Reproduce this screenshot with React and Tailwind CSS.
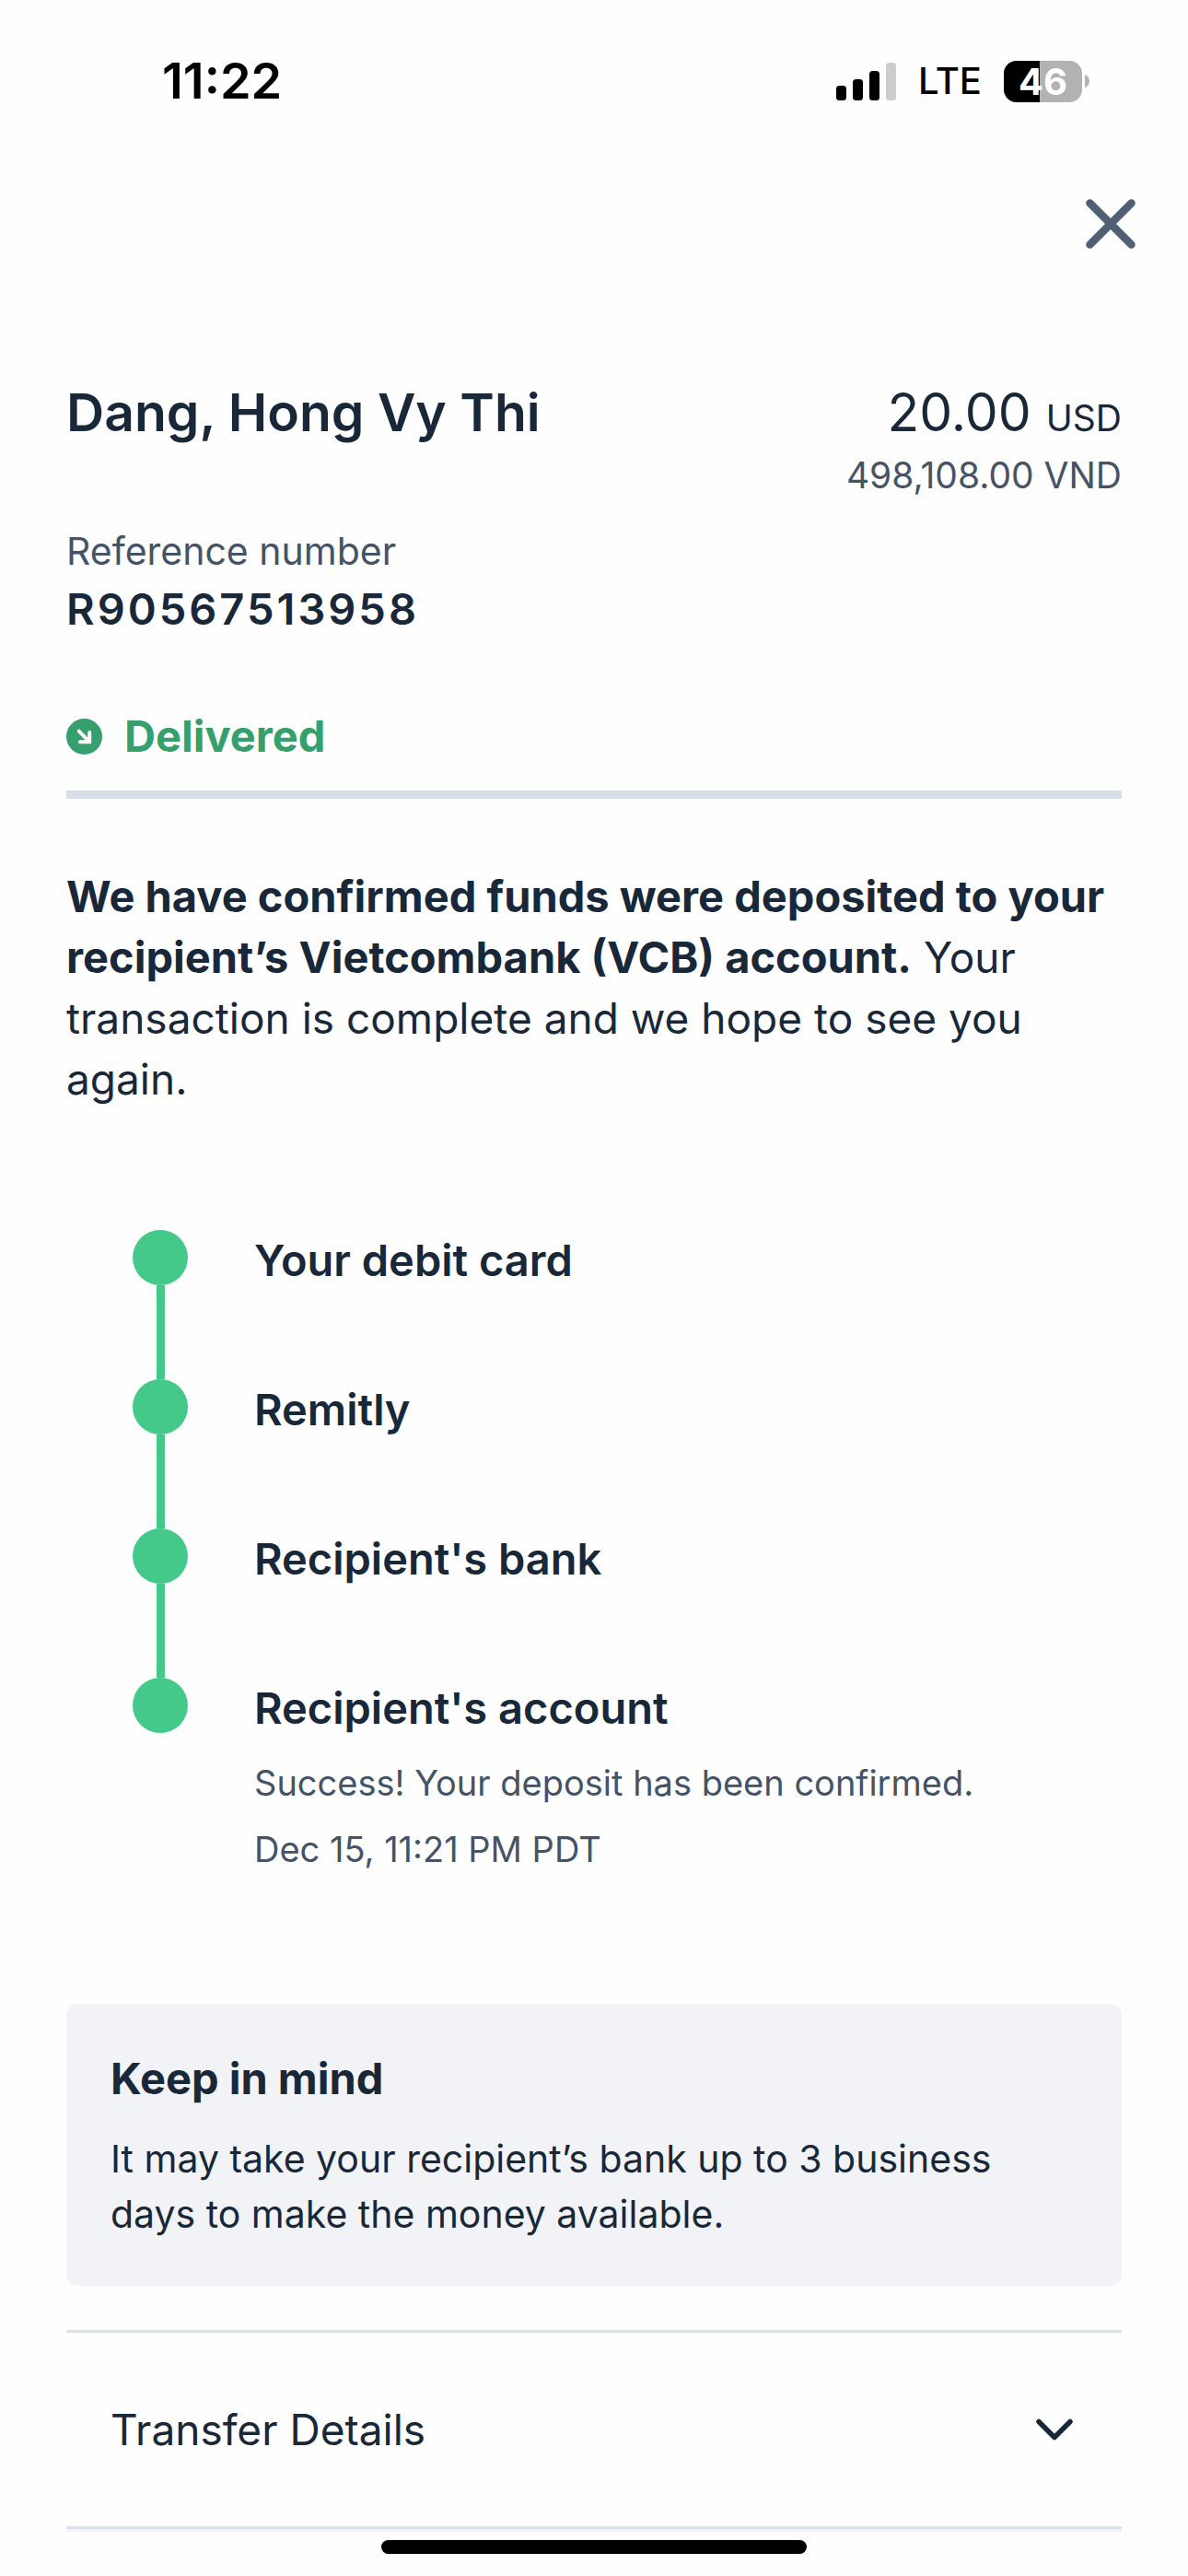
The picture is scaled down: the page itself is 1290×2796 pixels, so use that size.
import React, { useState } from "react";

const STEPS = [
  { id: 1, title: "Your debit card" },
  { id: 2, title: "Remitly" },
  { id: 3, title: "Recipient's bank" },
  {
    id: 4,
    title: "Recipient's account",
    notes: ["Success! Your deposit has been confirmed.", "Dec 15, 11:21 PM PDT"],
  },
];

function SignalIcon() {
  return (
    <svg className="w-[65px] h-[41px]" viewBox="0 0 65 41" aria-hidden="true">
      <rect x="0" y="25" width="11" height="16" rx="3.5" />
      <rect x="18" y="18" width="11" height="23" rx="3.5" />
      <rect x="36" y="9" width="11" height="32" rx="3.5" />
      <rect x="54" y="0" width="11" height="41" rx="3.5" fill="#cccccc" />
    </svg>
  );
}

function Battery({ level }) {
  return (
    <div className="flex items-center gap-[3px]">
      <div className="relative w-[85px] h-[45px] rounded-[14px] bg-[#b2b2b2]">
        <div className="absolute inset-y-0 left-0 rounded-l-[14px] bg-black" style={{ width: `${level}%` }} />
        <span className="relative block text-center text-[40px] leading-[45px] font-bold text-white">{level}</span>
      </div>
      <svg className="w-[5px] h-[14px]" viewBox="0 0 5 14" aria-hidden="true">
        <path d="M0 0C3 1 5 3.700 5 7s-2 6-5 7z" fill="#b2b2b2" />
      </svg>
    </div>
  );
}

function StatusBar() {
  return (
    <div className="flex items-center justify-between h-[176px] pl-[176px] pr-[107px] text-black">
      <span className="text-[54px] leading-[60px] font-semibold">11:22</span>
      <div className="flex items-center">
        <SignalIcon />
        <span className="mx-6 text-[40px] leading-[60px] font-medium">LTE</span>
        <Battery level={46} />
      </div>
    </div>
  );
}

function Step({ step, last }) {
  return (
    <li className="flex gap-[72px]">
      <div className="flex flex-col items-center">
        <span className="size-[60px] rounded-full bg-[#45c98a]" />
        {!last && <span className="w-[9px] h-[102px] bg-[#45c98a]" />}
      </div>
      <div>
        <h3 className="text-[47px] leading-[66px] font-semibold">{step.title}</h3>
        {step.notes && (
          <div className="mt-3 text-[38px] leading-[72px] text-[#445365]">
            {step.notes.map(note => (
              <p key={note}>{note}</p>
            ))}
          </div>
        )}
      </div>
    </li>
  );
}

export default function App() {
  const [open, setOpen] = useState(false);

  return (
    <div className="min-h-screen bg-[#fefefe] font-['Inter',sans-serif] text-[#192839]">
      <StatusBar />

      <div className="flex items-center justify-end h-[134px] pr-[39px]">
        <button type="button" aria-label="Close" className="size-[90px] p-[18px]">
          <svg className="size-[54px]" viewBox="0 0 54 54" fill="none" stroke="#506073" strokeWidth="8.500" strokeLinecap="round" aria-hidden="true">
            <path d="M4.500 4.500l45 45M49.500 4.500l-45 45" />
          </svg>
        </button>
      </div>

      <main className="px-[72px] pt-[102px]">
        <div className="flex justify-between">
          <h1 className="text-[57px] leading-[72px] font-semibold">Dang, Hong Vy Thi</h1>
          <div className="text-right">
            <p className="text-[57px] leading-[72px]">
              20.00 <span className="text-[39px] leading-[39px]">USD</span>
            </p>
            <p className="text-[39px] leading-[64px] text-[#445365]">498,108.00 VND</p>
          </div>
        </div>

        <dl className="mt-5">
          <dt className="text-[41px] leading-[60px] text-[#445365]">Reference number</dt>
          <dd className="text-[47px] leading-[66px] font-semibold tracking-[3px]">R90567513958</dd>
        </dl>

        <div className="flex items-center gap-6 mt-[72px] pb-[26px] border-b-[9px] border-[#d9dfe8] text-[#36a06d]">
          <svg className="size-[39px]" viewBox="0 0 39 39" fill="none" aria-hidden="true">
            <circle cx="19.500" cy="19.500" r="19.500" fill="currentColor" />
            <path d="M13.700 13.700l11 11M25.200 15v10.200H15" stroke="#fff" strokeWidth="4" strokeLinecap="round" strokeLinejoin="miter" />
          </svg>
          <span className="text-[47px] leading-[66px] font-bold">Delivered</span>
        </div>

        <p className="mt-[73px] text-[46px] leading-[66px]">
          <strong className="text-[47px] leading-[47px] font-bold">
            We have confirmed funds were deposited to your recipient’s Vietcombank (VCB) account.
          </strong>{" "}
          Your transaction is complete and we hope to see you again.
        </p>

        <ol className="mt-[131px] pl-[72px]">
          {STEPS.map((step, i) => (
            <Step key={step.id} step={step} last={i === STEPS.length - 1} />
          ))}
        </ol>

        <section className="mt-[132px] px-12 py-12 rounded-xl bg-[#f2f3f7]">
          <h2 className="text-[47px] leading-[66px] font-bold">Keep in mind</h2>
          <p className="mt-6 text-[41px] leading-[60px]">
            It may take your recipient’s bank up to 3 business days to make the money available.
          </p>
        </section>

        <div className="mt-12 border-y-[3px] border-[#d9e0e8]">
          <button
            type="button"
            aria-expanded={open}
            onClick={() => setOpen(!open)}
            className="flex items-center justify-between w-full px-12 py-[72px] text-[46px] leading-[66px]"
          >
            Transfer Details
            <svg className="w-[48px] h-[24px]" viewBox="0 0 48 24" fill="none" stroke="currentColor" strokeWidth="5.500" strokeLinecap="round" strokeLinejoin="round" aria-hidden="true">
              <path d="M6 3.500L23 20.500 40 3.500" />
            </svg>
          </button>
        </div>
        <div className="h-[3px] bg-[#f2f3f7]" />
      </main>

      <div className="w-[462px] h-[15px] mx-auto mt-[9px] rounded-full bg-black" />
    </div>
  );
}
